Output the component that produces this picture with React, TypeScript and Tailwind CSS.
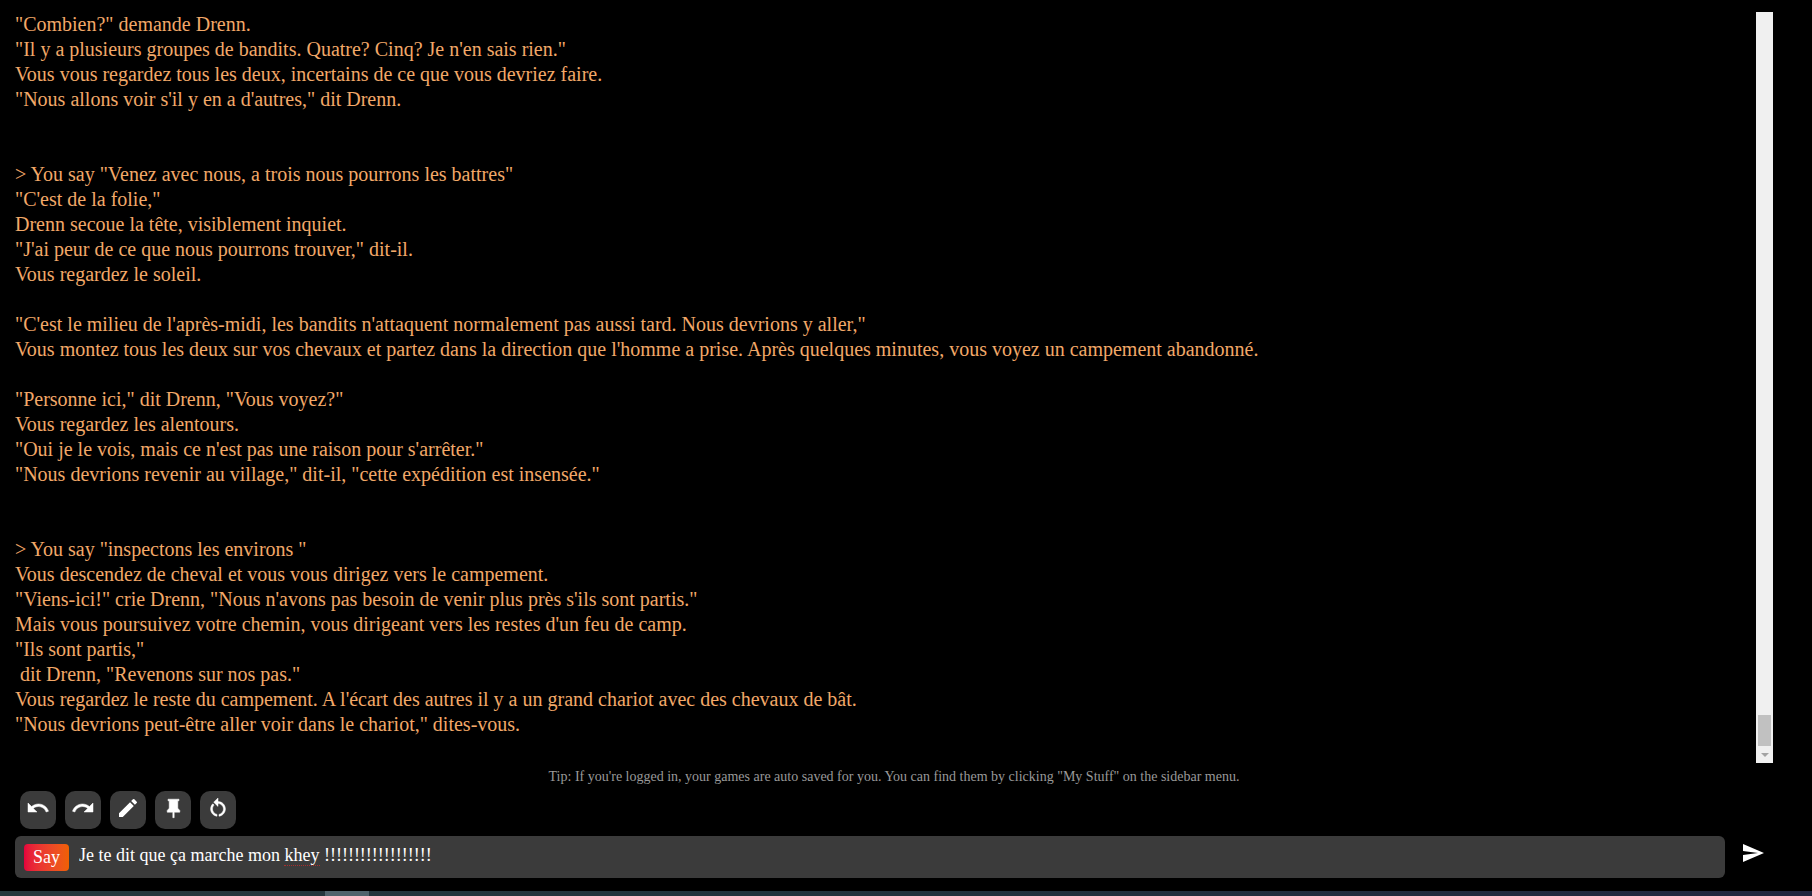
import React, { useState } from 'react';
import { MdCreate, MdSend } from 'react-icons/md';

const story = `"Combien?" demande Drenn.
"Il y a plusieurs groupes de bandits. Quatre? Cinq? Je n'en sais rien."
Vous vous regardez tous les deux, incertains de ce que vous devriez faire.
"Nous allons voir s'il y en a d'autres," dit Drenn.


> You say "Venez avec nous, a trois nous pourrons les battres"
"C'est de la folie,"
Drenn secoue la tête, visiblement inquiet.
"J'ai peur de ce que nous pourrons trouver," dit-il.
Vous regardez le soleil.

"C'est le milieu de l'après-midi, les bandits n'attaquent normalement pas aussi tard. Nous devrions y aller,"
Vous montez tous les deux sur vos chevaux et partez dans la direction que l'homme a prise. Après quelques minutes, vous voyez un campement abandonné.

"Personne ici," dit Drenn, "Vous voyez?"
Vous regardez les alentours.
"Oui je le vois, mais ce n'est pas une raison pour s'arrêter."
"Nous devrions revenir au village," dit-il, "cette expédition est insensée."


> You say "inspectons les environs "
Vous descendez de cheval et vous vous dirigez vers le campement.
"Viens-ici!" crie Drenn, "Nous n'avons pas besoin de venir plus près s'ils sont partis."
Mais vous poursuivez votre chemin, vous dirigeant vers les restes d'un feu de camp.
"Ils sont partis,"
 dit Drenn, "Revenons sur nos pas."
Vous regardez le reste du campement. A l'écart des autres il y a un grand chariot avec des chevaux de bât.
"Nous devrions peut-être aller voir dans le chariot," dites-vous.`;

const ActionIcon = ({ d }: { d: string }) => (
  <svg viewBox="0 0 24 24" className="h-6 w-6" fill="currentColor" stroke="currentColor" strokeWidth="0.5">
    <path d={d} />
  </svg>
);

const undoPath =
  'M12.500 8c-2.650 0-5.050.99-6.900 2.600L2 7v9h9l-3.620-3.620c1.390-1.160 3.160-1.880 5.120-1.880 3.540 0 6.550 2.310 7.600 5.500l2.370-.78C21.080 11.030 17.150 8 12.500 8z';
const redoPath =
  'M18.400 10.600C16.550 8.990 14.150 8 11.500 8c-4.650 0-8.580 3.030-9.960 7.220L3.900 16c1.050-3.190 4.050-5.500 7.600-5.500 1.950 0 3.730.72 5.120 1.880L13 16h9V7l-3.600 3.600z';
const pinPath = 'M7 3.200h11v1.600h-1.200v7.400l2 2.300v1.700h-5.600v5.500h-1.400v-5.500H6.200v-1.700l2-2.300V4.800H7z';
const retryPath =
  'M12 5.500V2L7.700 6.200l4.300 4.200V7.500c3 0 5.500 2.500 5.500 5.500 0 2.600-1.900 4.900-4.500 5.400v1.800c3.600-.5 6.400-3.500 6.400-7.200 0-4.100-3.300-7.500-7.400-7.500zM6.500 13c0-1.500.6-2.900 1.600-3.900L6.800 7.800C5.500 9.100 4.600 11 4.600 13c0 3.700 2.800 6.700 6.400 7.200v-1.800c-2.600-.5-4.500-2.800-4.500-5.400z';

const actions: { name: string; icon: React.ReactNode }[] = [
  { name: 'Undo', icon: <ActionIcon d={undoPath} /> },
  { name: 'Redo', icon: <ActionIcon d={redoPath} /> },
  { name: 'Edit', icon: <MdCreate className="h-6 w-6" /> },
  { name: 'Pin', icon: <ActionIcon d={pinPath} /> },
  { name: 'Retry', icon: <ActionIcon d={retryPath} /> },
];

const Scrollbar = () => (
  <div className="flex w-[17px] shrink-0 flex-col items-center justify-end bg-[#f0f0f0]">
    <div className="h-[31px] w-[13px] bg-[#c1c1c1]" />
    <div className="flex h-[17px] items-center">
      <svg viewBox="0 0 8 4" className="h-1 w-2" fill="#a3a3a3">
        <path d="M0 0h8L4 4z" />
      </svg>
    </div>
  </div>
);

const App: React.FC = () => {
  const [message, setMessage] = useState('Je te dit que ça marche mon khey !!!!!!!!!!!!!!!!!!');

  return (
    <div className="flex min-h-screen flex-col bg-black font-['Liberation_Serif','Times_New_Roman',serif]">
      <main className="flex grow flex-col pt-3 pr-[39px] pl-[15px]">
        <div className="flex min-h-[751px]">
          <p className="grow text-[20px] leading-[25px] whitespace-pre-wrap text-[#f2a868]">{story}</p>
          <Scrollbar />
        </div>

        <p className="mt-1 text-center text-[14px] leading-5 text-[#999999]">
          Tip: If you're logged in, your games are auto saved for you. You can find them by clicking "My Stuff" on the
          sidebar menu.
        </p>

        <div className="mt-1 flex gap-[9px] pl-[5px]">
          {actions.map((action) => (
            <button
              key={action.name}
              aria-label={action.name}
              className="flex h-[38px] w-9 items-center justify-center rounded-[10px] bg-[#3b3b3b] pb-1 text-white"
            >
              {action.icon}
            </button>
          ))}
        </div>

        <form className="mt-[7px] flex items-center" onSubmit={(e) => e.preventDefault()}>
          <div className="flex h-[42px] grow items-center rounded-md bg-[#3b3b3b] pl-[9px]">
            <button
              type="button"
              className="h-[27px] w-[45px] rounded bg-linear-to-r from-[#e6003c] to-[#f06000] text-[18px] leading-[27px] text-white"
            >
              Say
            </button>
            <div className="relative ml-[10px] grow pb-1">
              <input
                aria-label="Message"
                value={message}
                onChange={(e) => setMessage(e.target.value)}
                className="block h-7 w-full bg-transparent text-[18px] text-white outline-none"
              />
              {/* spelling mark */}
              <span className="absolute bottom-[7px] left-[205px] w-9 border-b border-dotted border-[#a83030]" />
            </div>
          </div>
          <button type="submit" aria-label="Send" className="ml-4 flex w-8 items-center pb-2 text-white">
            <MdSend className="h-6 w-6" />
          </button>
        </form>
      </main>

      <footer className="flex h-[5px] bg-linear-to-r from-[#26383c] via-[#20323c] to-[#20263f] pl-[325px]">
        <div className="w-11 bg-[#50636c]" />
      </footer>
    </div>
  );
};

export default App;
